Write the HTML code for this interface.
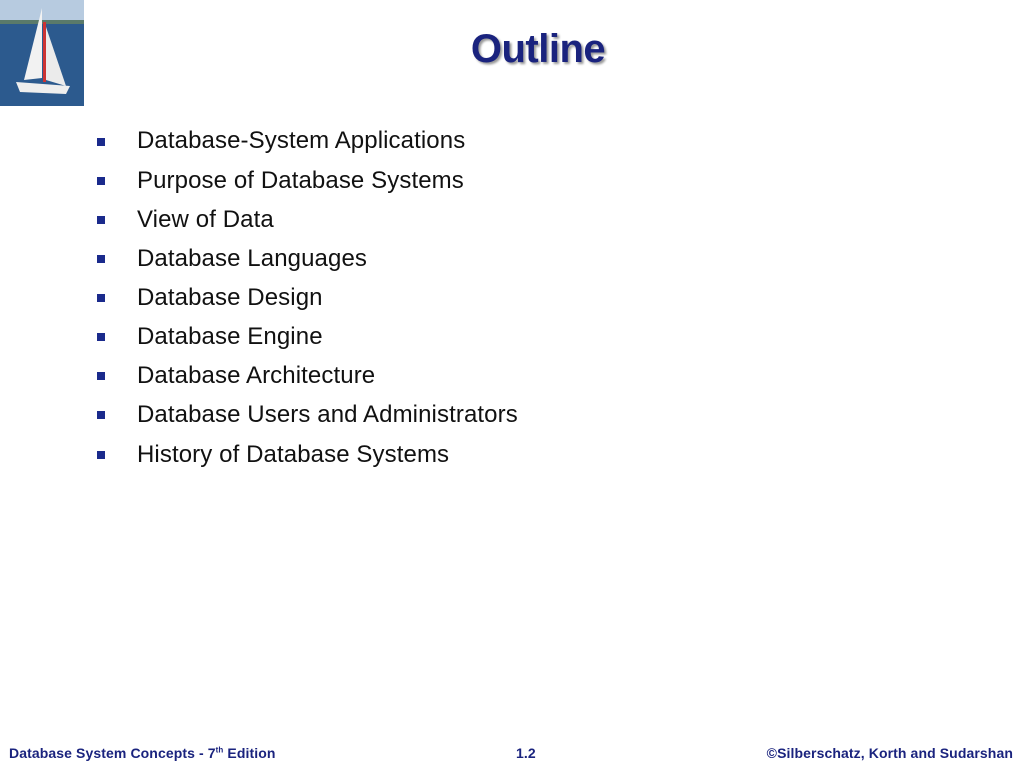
<!DOCTYPE html>
<html><head><style>
body{margin:0;width:1024px;height:768px;background:#fff;position:relative;overflow:hidden;font-family:"Liberation Sans",sans-serif}
.t{position:absolute;left:0;width:1076px;top:27px;text-align:center;font-size:40px;font-weight:bold;color:#1a237e;text-shadow:2px 2px 2px #999;letter-spacing:-0.5px}
.li{position:absolute;left:137px;font-size:24px;color:#111;letter-spacing:0.1px}
.b{position:absolute;left:97px;width:8px;height:8px;background:#1a2a8c}
.f{position:absolute;top:745px;font-size:14px;font-weight:bold;color:#1a237e;letter-spacing:0.1px}
</style></head><body>
<svg style="position:absolute;left:0;top:0" width="84" height="106">
<rect width="84" height="24" fill="#b7cbe0"/>
<rect y="20" width="84" height="5" fill="#5a7a6a"/>
<rect y="24" width="84" height="82" fill="#2c5a8e"/>
<path d="M42 8 L24 80 L42 78Z" fill="#f2f2f2"/>
<path d="M45 24 L46 80 L66 86Z" fill="#ebebeb"/>
<rect x="43" y="22" width="3" height="60" fill="#c33"/>
<path d="M16 82 L70 86 L66 94 L20 92Z" fill="#eee"/>
</svg>
<div class="t">Outline</div>
<div class="b" style="top:138px"></div><div class="li" style="top:127px">Database-System Applications</div>
<div class="b" style="top:177px"></div><div class="li" style="top:167px">Purpose of Database Systems</div>
<div class="b" style="top:216px"></div><div class="li" style="top:206px">View of Data</div>
<div class="b" style="top:255px"></div><div class="li" style="top:245px">Database Languages</div>
<div class="b" style="top:294px"></div><div class="li" style="top:284px">Database Design</div>
<div class="b" style="top:333px"></div><div class="li" style="top:323px">Database Engine</div>
<div class="b" style="top:372px"></div><div class="li" style="top:362px">Database Architecture</div>
<div class="b" style="top:411px"></div><div class="li" style="top:401px">Database Users and Administrators</div>
<div class="b" style="top:451px"></div><div class="li" style="top:441px">History of Database Systems</div>
<div class="f" style="left:9px">Database System Concepts - 7<sup style="font-size:8px">th</sup> Edition</div>
<div class="f" style="left:516px">1.2</div>
<div class="f" style="right:11px">©Silberschatz, Korth and Sudarshan</div>
</body></html>
